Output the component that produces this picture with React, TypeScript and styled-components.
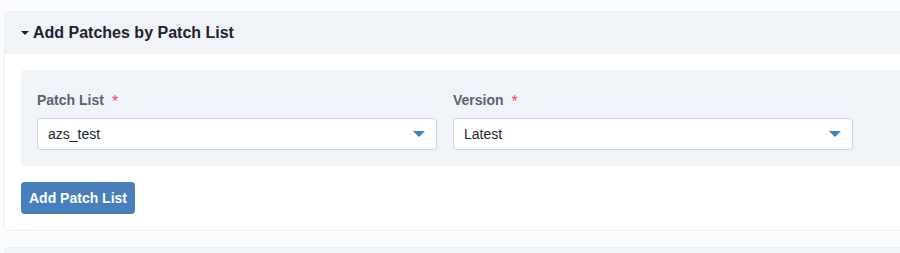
import React, { FunctionComponent } from 'react'
import styled, { createGlobalStyle } from 'styled-components'

const GlobalStyle = createGlobalStyle`
  html, body {
    margin: 0;
    padding: 0;
    background: #f9fbfd;
    overflow: hidden;
    font-family: "Liberation Sans", Arial, sans-serif;
  }
`

const Page = styled.main`
  padding: 11px 0 0 4px;
  width: 1100px;
`

const Card = styled.section`
  border: 1px solid #eceff4;
  border-radius: 4px;
  background: #ffffff;
  margin-bottom: 16px;
  overflow: hidden;
`

const CardHeader = styled.header`
  display: flex;
  align-items: center;
  height: 42px;
  padding: 0 16px;
  background: #f0f3f8;
`

const Caret = styled.span`
  display: inline-block;
  width: 0;
  height: 0;
  border-left: 4px solid transparent;
  border-right: 4px solid transparent;
  border-top: 4px solid #1e2230;
  margin-right: 4px;
`

const Title = styled.h2`
  margin: 0;
  font-size: 16px;
  font-weight: 700;
  color: #1e2230;
`

const CardBody = styled.div`
  padding: 16px;
`

const FieldPanel = styled.div`
  display: flex;
  gap: 16px;
  padding: 20px 16px 16px;
  background: #f0f3f8;
  border-radius: 4px;
`

const Field = styled.div`
  display: flex;
  flex-direction: column;
  gap: 8px;
  width: 400px;
`

const Label = styled.label`
  display: flex;
  align-items: center;
  height: 20px;
  font-size: 14px;
  font-weight: 700;
  color: #5b6171;
`

const Required = styled.span`
  margin-left: 8px;
  color: #e5505e;
  font-size: 16px;
  font-weight: 400;
  line-height: 1;
  padding-top: 3px;
`

const Select = styled.div`
  display: flex;
  align-items: center;
  justify-content: space-between;
  box-sizing: border-box;
  height: 32px;
  padding: 0 11px 0 10px;
  background: #ffffff;
  border: 1px solid #ccd4e1;
  border-radius: 4px;
  font-size: 14px;
  color: #222630;
`

const SelectCaret = styled.span`
  width: 0;
  height: 0;
  border-left: 6px solid transparent;
  border-right: 6px solid transparent;
  border-top: 6px solid #467fbb;
`

const Button = styled.button`
  margin-top: 16px;
  height: 32px;
  padding: 0 8px;
  border: none;
  border-radius: 4px;
  background: #467fbb;
  color: #ffffff;
  font-family: inherit;
  font-size: 14px;
  font-weight: 700;
`

const NextHeader = styled.div`
  height: 42px;
  background: #f0f3f8;
`

const fields = [
  { label: 'Patch List', value: 'azs_test' },
  { label: 'Version', value: 'Latest' },
]

const App: FunctionComponent = () => (
  <>
    <GlobalStyle />
    <Page>
      <Card>
        <CardHeader>
          <Caret />
          <Title>Add Patches by Patch List</Title>
        </CardHeader>
        <CardBody>
          <FieldPanel>
            {fields.map((f) => (
              <Field key={f.label}>
                <Label>
                  {f.label}
                  <Required>*</Required>
                </Label>
                <Select>
                  <span>{f.value}</span>
                  <SelectCaret />
                </Select>
              </Field>
            ))}
          </FieldPanel>
          <Button>Add Patch List</Button>
        </CardBody>
      </Card>
      <Card>
        <NextHeader />
      </Card>
    </Page>
  </>
)

export default App
